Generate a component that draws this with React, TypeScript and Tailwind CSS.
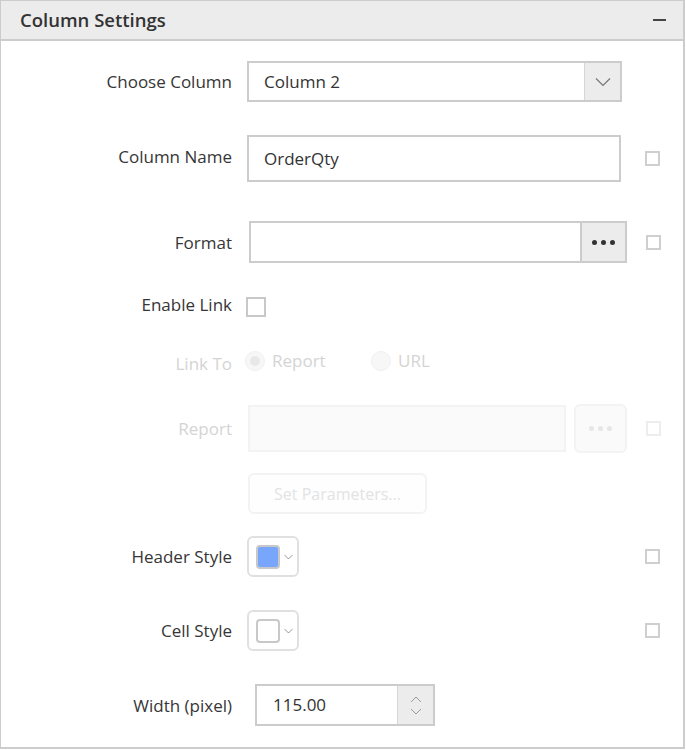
import React from "react";

const font = { fontFamily: '"Open Sans", "Noto Sans", Arial, sans-serif' };

function Box({ light = false }: { light?: boolean }) {
  return (
    <div
      className={`w-[15px] h-[15px] border-2 ${
        light ? "border-[#ededed]" : "border-[#cfcfcf]"
      }`}
    />
  );
}

function Chevron({ className = "" }: { className?: string }) {
  return (
    <svg viewBox="0 0 16 10" className={className} fill="none">
      <path d="M1 1.5 L8 8.5 L15 1.5" stroke="currentColor" strokeWidth="1.2" />
    </svg>
  );
}

function Dots({ color }: { color: string }) {
  return (
    <div className="flex gap-[4px]">
      <span className={`w-[5px] h-[5px] rounded-full ${color}`} />
      <span className={`w-[5px] h-[5px] rounded-full ${color}`} />
      <span className={`w-[5px] h-[5px] rounded-full ${color}`} />
    </div>
  );
}

function Label({
  children,
  faint = false,
  className = "",
}: {
  children: React.ReactNode;
  faint?: boolean;
  className?: string;
}) {
  return (
    <span
      className={`block w-[231px] shrink-0 text-right text-[17px] leading-none ${
        faint ? "text-[#d4d4d4]" : "text-[#363636]"
      } ${className}`}
    >
      {children}
    </span>
  );
}

function ColorPick({ swatch }: { swatch: string }) {
  return (
    <div className="ml-[15px] w-[52px] h-[41px] rounded-md border-2 border-[#e0e0e0] flex items-center pl-[7px] gap-[4px]">
      <div className={`w-[24px] h-[24px] rounded-[4px] border-2 border-[#c8c8c8] ${swatch}`} />
      <Chevron className="w-[9px] h-[6px] text-[#666]" />
    </div>
  );
}

export default function App() {
  return (
    <div className="w-[686px] h-[750px] bg-white" style={font}>
      <div className="w-[685px] h-[749px] border-l border-r-2 border-b-2 border-t border-[#cccccc] flex flex-col">
        <div className="h-[40px] shrink-0 bg-[#ececec] border-b-2 border-[#cccccc] flex items-center pl-[19px] pr-[17px]">
          <span className="text-[18.5px] font-semibold text-[#333333] flex-1">Column Settings</span>
          <span className="w-[13px] h-[2px] bg-[#444444]" />
        </div>

        {/* Choose Column */}
        <div className="flex items-center mt-[20px] h-[41px]">
          <Label>Choose Column</Label>
          <div className="ml-[15px] w-[375px] h-[41px] border-2 border-[#cccccc] flex">
            <div className="flex-1 flex items-center pl-[15px] text-[17px] text-[#333]">Column 2</div>
            <div className="w-[36px] bg-[#ececec] border-l border-[#d6d6d6] flex items-center justify-center">
              <Chevron className="w-[16px] h-[10px] text-[#777]" />
            </div>
          </div>
        </div>

        {/* Column Name */}
        <div className="flex items-center mt-[33px] h-[47px]">
          <Label className="mb-[5px]">Column Name</Label>
          <div className="ml-[15px] w-[374px] h-[47px] border-2 border-[#cccccc] flex items-center pl-[15px] text-[17px] text-[#333]">
            OrderQty
          </div>
          <div className="ml-[24px] mb-[1px]">
            <Box />
          </div>
        </div>

        {/* Format */}
        <div className="flex items-center mt-[39px] h-[42px]">
          <Label>Format</Label>
          <div className="ml-[17px] w-[378px] h-[42px] border-2 border-[#cccccc] flex">
            <div className="flex-1" />
            <div className="w-[45px] bg-[#ececec] border-l-2 border-[#cccccc] flex items-center justify-center">
              <Dots color="bg-[#333333]" />
            </div>
          </div>
          <div className="ml-[19px]">
            <Box />
          </div>
        </div>

        {/* Enable Link */}
        <div className="flex items-center mt-[34px] h-[20px]">
          <Label className="mb-[5px]">Enable Link</Label>
          <div className="ml-[14px] w-[20px] h-[20px] border-2 border-[#c8c8c8]" />
        </div>

        {/* Link To */}
        <div className="flex items-center mt-[34px] h-[20px]">
          <Label faint className="mt-[5px]">
            Link To
          </Label>
          <div className="ml-[13px] w-[20px] h-[20px] rounded-full bg-[#f7f7f7] border border-[#f0f0f0] flex items-center justify-center">
            <span className="w-[10px] h-[10px] rounded-full bg-[#e8e8e8]" />
          </div>
          <span className="ml-[7px] text-[17px] text-[#d4d4d4] w-[99px]">Report</span>
          <div className="w-[20px] h-[20px] rounded-full bg-[#f7f7f7] border border-[#f0f0f0]" />
          <span className="ml-[7px] text-[17px] text-[#d4d4d4]">URL</span>
        </div>

        {/* Report */}
        <div className="flex items-center mt-[33px] h-[49px]">
          <Label faint>Report</Label>
          <div className="ml-[16px] w-[318px] h-[47px] bg-[#fafafa] border-2 border-[#f3f3f3]" />
          <div className="ml-[8px] w-[53px] h-[49px] rounded-md bg-[#fafafa] border-2 border-[#f3f3f3] flex items-center justify-center">
            <Dots color="bg-[#e6e6e6]" />
          </div>
          <div className="ml-[19px]">
            <Box light />
          </div>
        </div>

        {/* Set Parameters */}
        <div className="flex items-center mt-[20px] h-[41px]">
          <div className="ml-[247px] w-[179px] h-[41px] rounded-md bg-[#fefefe] border-2 border-[#f3f3f3] flex items-center justify-center text-[16px] text-[#e3e3e3]">
            Set Parameters...
          </div>
        </div>

        {/* Header Style */}
        <div className="flex items-center mt-[22px] h-[41px]">
          <Label>Header Style</Label>
          <ColorPick swatch="bg-[#78a6fc]" />
          <div className="ml-[346px]">
            <Box />
          </div>
        </div>

        {/* Cell Style */}
        <div className="flex items-center mt-[33px] h-[41px]">
          <Label>Cell Style</Label>
          <ColorPick swatch="bg-white" />
          <div className="ml-[346px]">
            <Box />
          </div>
        </div>

        {/* Width */}
        <div className="flex items-center mt-[33px] h-[42px]">
          <Label>Width (pixel)</Label>
          <div className="ml-[23px] w-[180px] h-[42px] border-2 border-[#cccccc] flex">
            <div className="flex-1 flex items-center pl-[16px] text-[17px] text-[#333]">115.00</div>
            <div className="w-[36px] bg-[#ececec] border-l border-[#d6d6d6] flex flex-col items-center justify-center gap-[5px]">
              <Chevron className="w-[12px] h-[7px] text-[#888] rotate-180" />
              <Chevron className="w-[12px] h-[7px] text-[#888]" />
            </div>
          </div>
        </div>
      </div>
    </div>
  );
}
